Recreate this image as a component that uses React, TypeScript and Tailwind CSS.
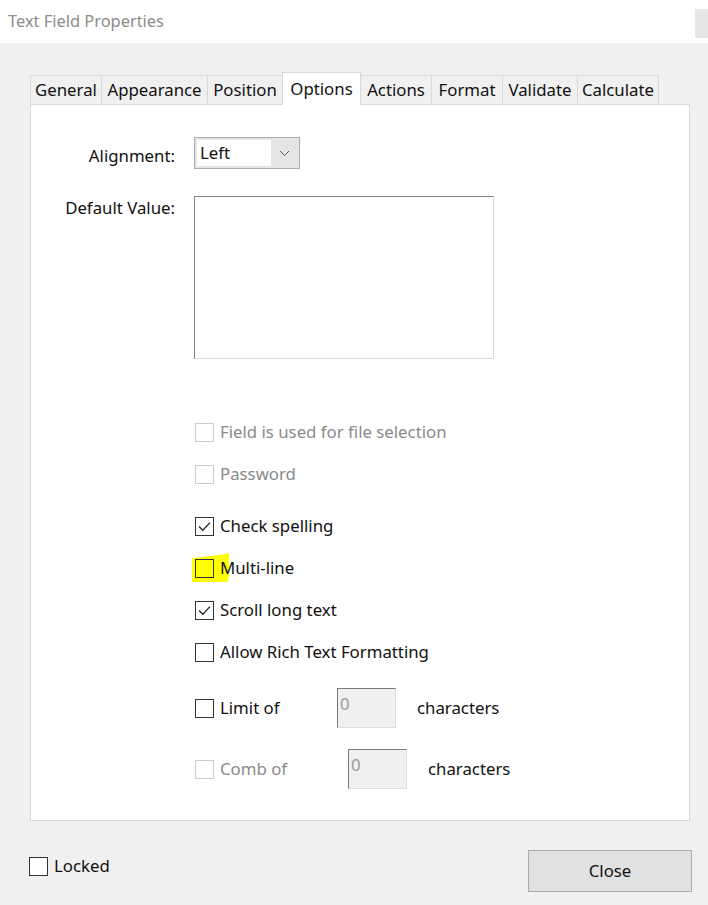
import React from 'react';

const FONT = { fontFamily: '"Noto Sans", "Open Sans", sans-serif' };

function Box({ checked, disabled, className = '' }: { checked?: boolean; disabled?: boolean; className?: string }) {
    return (
        <span className={`relative flex h-[19px] w-[19px] shrink-0 items-center justify-center border ${disabled ? 'border-[#cccccc]' : 'border-[#333333]'} ${className || 'bg-white'}`}>
            {checked && (
                <svg width="15" height="15" viewBox="0 0 15 15" fill="none">
                    <path d="M2 7.5 L5.8 11.3 L13 3.6" stroke="#222" strokeWidth="1.3" />
                </svg>
            )}
        </span>
    );
}

function CheckRow({ label, checked, disabled, highlight, className = '' }: { label: string; checked?: boolean; disabled?: boolean; highlight?: boolean; className?: string }) {
    return (
        <div className={`relative flex h-[24px] items-center gap-[6px] ${className}`}>
            {highlight && <span className="absolute -left-[3px] top-[-3px] h-[29px] w-[37px] bg-[#ffff00] [clip-path:polygon(0%_18%,88%_4%,100%_0%,100%_78%,96%_100%,0%_100%)]" />}
            <Box checked={checked} disabled={disabled} className={highlight ? 'bg-transparent' : ''} />
            <span className={`relative text-[16.8px] leading-[24px] ${disabled ? 'text-[#8a8a8a]' : 'text-[#111]'}`}>{label}</span>
        </div>
    );
}

function NumField() {
    return (
        <div className="h-[40px] w-[59px] border border-t-[#7a7a7a] border-l-[#7a7a7a] border-r-[#dcdcdc] border-b-[#dcdcdc] bg-[#f0f0f0] px-[2px] text-[16.8px] leading-[30px] text-[#9a9a9a]">
            0
        </div>
    );
}

const tabs: [string, number][] = [
    ['General', 72],
    ['Appearance', 107],
    ['Position', 76],
    ['Options', 79],
    ['Actions', 72],
    ['Format', 72],
    ['Validate', 76],
    ['Calculate', 82],
];

export default function App() {
    return (
        <div className="flex h-[905px] w-[708px] flex-col overflow-hidden bg-[#f0f0f0]" style={FONT}>
            <div className="flex h-[43px] items-start bg-white">
                <span className="mt-[9px] pl-[8px] text-[16.4px] text-[#8c8c8c]">Text Field Properties</span>
                <span className="ml-auto mt-[9px] h-[29px] w-[13px] bg-[#e6e6e6]" />
            </div>

            <div className="ml-[30px] mt-[29px] flex h-[32px] items-end">
                {tabs.map(([t, w]) =>
                    t === 'Options' ? (
                        <div key={t} style={{ width: w }} className="relative z-10 -mb-px -ml-px flex h-[33px] items-start justify-center border border-b-0 border-[#d9d9d9] bg-white pt-[4px] text-[16.8px] leading-[24px] text-[#111]">
                            {t}
                        </div>
                    ) : (
                        <div key={t} style={{ width: w }} className="-ml-px flex h-[29px] items-center justify-center border border-b-0 border-[#d9d9d9] bg-[#f0f0f0] text-[16.8px] leading-[24px] text-[#111] first:ml-0">
                            {t}
                        </div>
                    )
                )}
            </div>

            <div className="ml-[30px] flex h-[717px] w-[660px] flex-col border border-[#d9d9d9] bg-white">
                <div className="mt-[32px] flex items-start">
                    <span className="w-[144px] pt-[7px] text-right text-[16.8px] leading-[24px] text-[#111]">Alignment:</span>
                    <div className="ml-[19px] flex h-[32px] w-[106px] items-stretch border border-[#adadad] bg-[#e5e5e5] p-[2px]">
                        <span className="flex w-[74px] items-center bg-white pl-[3px] text-[16.8px] leading-[24px] text-[#111]">Left</span>
                        <span className="flex flex-1 items-center justify-center">
                            <svg width="11" height="7" viewBox="0 0 11 7" fill="none">
                                <path d="M1 1 L5.5 5.5 L10 1" stroke="#555" strokeWidth="1" />
                            </svg>
                        </span>
                    </div>
                </div>

                <div className="mt-[27px] flex items-start">
                    <span className="w-[144px] text-right text-[16.8px] leading-[24px] text-[#111]">Default Value:</span>
                    <div className="ml-[19px] h-[163px] w-[300px] border border-t-[#828282] border-l-[#828282] border-r-[#dadada] border-b-[#dadada] bg-white" />
                </div>

                <div className="ml-[164px] flex flex-col">
                    <CheckRow className="mt-[61px]" label="Field is used for file selection" disabled />
                    <CheckRow className="mt-[18px]" label="Password" disabled />
                    <CheckRow className="mt-[28px]" label="Check spelling" checked />
                    <CheckRow className="mt-[18px]" label="Multi-line" highlight />
                    <CheckRow className="mt-[18px]" label="Scroll long text" checked />
                    <CheckRow className="mt-[18px]" label="Allow Rich Text Formatting" />

                    <div className="mt-[24px] flex h-[40px] items-center">
                        <Box />
                        <span className="ml-[6px] w-[117px] text-[16.8px] leading-[24px] text-[#111]">Limit of</span>
                        <NumField />
                        <span className="ml-[21px] text-[16.8px] leading-[24px] text-[#111]">characters</span>
                    </div>
                    <div className="mt-[21px] flex h-[40px] items-center">
                        <Box disabled />
                        <span className="ml-[6px] w-[128px] text-[16.8px] leading-[24px] text-[#8a8a8a]">Comb of</span>
                        <NumField />
                        <span className="ml-[21px] text-[16.8px] leading-[24px] text-[#111]">characters</span>
                    </div>
                </div>
            </div>

            <div className="mt-[29px] flex items-start px-[16px]">
                <div className="ml-[13px] mt-[4px] flex items-center gap-[6px]">
                    <Box />
                    <span className="text-[16.8px] leading-[24px] text-[#111]">Locked</span>
                </div>
                <button className="ml-auto h-[42px] w-[164px] border border-[#adadad] bg-[#e1e1e1] text-[16.8px] text-[#111]">Close</button>
            </div>
        </div>
    );
}
